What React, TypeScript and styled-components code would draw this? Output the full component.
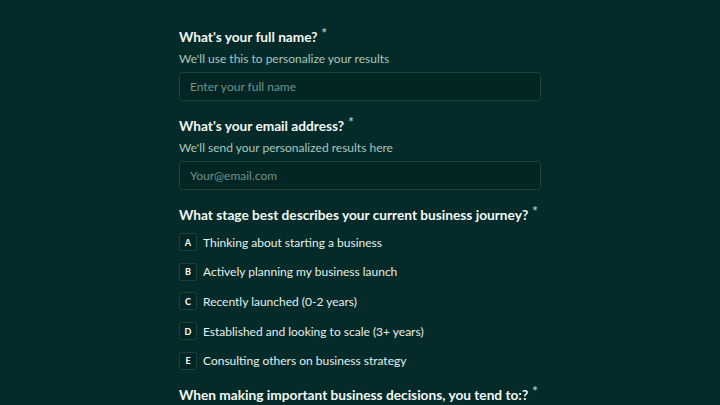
import React from 'react';
import styled, {createGlobalStyle} from "styled-components";

const GlobalStyle = createGlobalStyle`
  html, body {
    margin: 0;
    padding: 0;
    background: #042b29;
    font-family: Lato, "Noto Sans", sans-serif;
    overflow: hidden;
  }
`

const Page = styled.main`
  width: 362px;
  margin: 0 auto;
  padding-top: 27px;
  color: #ffffff;
`

const Question = styled.section`
  margin-bottom: 15px;
`

const Title = styled.h2`
  margin: 0;
  font-size: 13.7px;
  font-weight: 700;
  line-height: 20px;
  color: #f2f7f5;
  white-space: nowrap;
`

const Required = styled.sup`
  margin-left: 4px;
  font-size: 13px;
  font-weight: 700;
  color: #a9c6bd;
  vertical-align: 4px;
  line-height: 0;
`

const Hint = styled.p`
  margin: 3px 0 4px;
  font-size: 12px;
  line-height: 18px;
  color: #a9c6bd;
`

const TextInput = styled.input`
  box-sizing: border-box;
  display: block;
  width: 100%;
  height: 29px;
  padding: 0 10px;
  border: 1px solid #15453e;
  border-radius: 3px;
  background: #032624;
  color: #ffffff;
  font-family: inherit;
  font-size: 12px;
  outline: none;

  &::placeholder {
    color: #6f948b;
  }
`

const Options = styled.ul`
  list-style: none;
  margin: 8px 0 0;
  padding: 0;
  display: flex;
  flex-direction: column;
  gap: 11.7px;
`

const Option = styled.li`
  display: flex;
  align-items: center;
  gap: 6px;
  font-size: 12px;
  color: #e6efec;
`

const Key = styled.span`
  box-sizing: border-box;
  width: 18px;
  height: 18px;
  display: flex;
  align-items: center;
  justify-content: center;
  border: 1px solid #16443d;
  border-radius: 2px;
  background: #032624;
  font-size: 9px;
  font-weight: 700;
  color: #ffffff;
`

const stages = [
    'Thinking about starting a business',
    'Actively planning my business launch',
    'Recently launched (0-2 years)',
    'Established and looking to scale (3+ years)',
    'Consulting others on business strategy',
]

const App: React.FC = () => {
    return (
        <>
            <GlobalStyle/>
            <Page>
                <Question>
                    <Title>What's your full name?<Required>*</Required></Title>
                    <Hint>We'll use this to personalize your results</Hint>
                    <TextInput placeholder="Enter your full name"/>
                </Question>
                <Question>
                    <Title>What's your email address?<Required>*</Required></Title>
                    <Hint>We'll send your personalized results here</Hint>
                    <TextInput type="email" placeholder="Your@email.com"/>
                </Question>
                <Question>
                    <Title>What stage best describes your current business journey?<Required>*</Required></Title>
                    <Options>
                        {stages.map((s, i) => (
                            <Option key={s}>
                                <Key>{String.fromCharCode(65 + i)}</Key>
                                {s}
                            </Option>
                        ))}
                    </Options>
                </Question>
                <Question>
                    <Title>When making important business decisions, you tend to:?<Required>*</Required></Title>
                </Question>
            </Page>
        </>
    );
}

export default App;
